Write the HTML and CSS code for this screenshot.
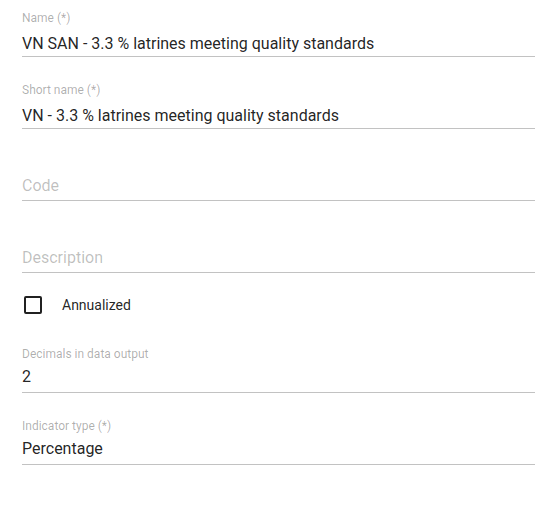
FILE: index.html
```html
<!DOCTYPE html>
<html>
<head>
<meta charset="utf-8">
<link rel="stylesheet" href="styles.css">
</head>
<body>
<form class="form">
  <div class="field">
    <div class="label">Name (*)</div>
    <div class="value multi">VN SAN - 3.3 % latrines meeting quality standards</div>
  </div>
  <div class="field">
    <div class="label">Short name (*)</div>
    <div class="value multi">VN - 3.3 % latrines meeting quality standards</div>
  </div>
  <div class="field">
    <div class="value placeholder">Code</div>
  </div>
  <div class="field">
    <div class="value placeholder">Description</div>
  </div>
  <div class="check-row">
    <span class="box"></span>
    <span class="check-label">Annualized</span>
  </div>
  <div class="field">
    <div class="label">Decimals in data output</div>
    <div class="value">2</div>
  </div>
  <div class="field">
    <div class="label">Indicator type (*)</div>
    <div class="value">Percentage</div>
  </div>
</form>
</body>
</html>
```
FILE: styles.css
```css
html, body {
  margin: 0;
  padding: 0;
  background: #ffffff;
}
body {
  font-family: Roboto, "Noto Sans", sans-serif;
  color: rgba(0, 0, 0, 0.87);
}
.form {
  display: flex;
  flex-direction: column;
  gap: 15px;
  padding-left: 22px;
}
.field {
  box-sizing: border-box;
  height: 57px;
  padding-top: 10px;
  border-bottom: 1px solid #c2c2c2;
  display: flex;
  flex-direction: column;
}
.label {
  font-size: 12px;
  line-height: 16px;
  color: rgba(0, 0, 0, 0.32);
}
.value {
  margin-top: auto;
  font-size: 16px;
  line-height: 24px;
  padding-bottom: 3px;
  white-space: nowrap;
}
.value.multi {
  padding-bottom: 0;
}
.value.placeholder {
  padding-bottom: 2px;
  color: rgba(0, 0, 0, 0.26);
}
.check-row {
  height: 33px;
  display: flex;
  align-items: center;
  padding-left: 2px;
}
.box {
  box-sizing: border-box;
  width: 18px;
  height: 18px;
  border: 2px solid #212121;
  border-radius: 2px;
  margin-right: 20px;
}
.check-label {
  font-size: 14px;
  line-height: 18px;
}
```
